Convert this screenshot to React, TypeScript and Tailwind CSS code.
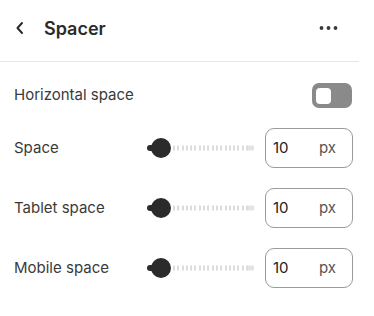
import React from "react";

function Slider() {
  return (
    <div className="relative w-[108px] h-[20px] flex items-center">
      <div className="absolute left-[26px] right-[6px] top-1/2 -translate-y-1/2 h-[5px] bg-[repeating-linear-gradient(90deg,#dcdcdc_0_2px,transparent_2px_4.3px)]" />
      <div className="absolute right-[1px] top-1/2 -translate-y-1/2 h-[5px] w-[6px] bg-[#e3e3e3] rounded-[1px]" />
      <div className="absolute left-0 top-1/2 -translate-y-1/2 h-[6px] w-[10px] bg-[#2b2b2b] rounded-l-full" />
      <div className="absolute left-[4px] top-0 w-[20px] h-[20px] rounded-full bg-[#2b2b2b]" />
    </div>
  );
}

function Row({ label }: { label: string }) {
  return (
    <div className="flex items-center h-[40px]">
      <div className="w-[133px] text-[15px] text-[#3a3a3a]">{label}</div>
      <Slider />
      <div className="ml-auto w-[88px] h-[40px] border border-[#9a9a9a] rounded-[9px] flex items-center pl-[7px] pr-[16px] text-[15px]">
        <span className="text-[#222]">10</span>
        <span className="ml-auto text-[#555]">px</span>
      </div>
    </div>
  );
}

export default function App() {
  return (
    <div className="w-[374px] h-[316px] bg-white" style={{ fontFamily: "Inter, 'Noto Sans', sans-serif" }}>
      <div className="w-[359px]">
        <div className="h-[62px] pb-[5px] border-b border-[#e6e6e6] flex items-center">
          <div className="flex items-center h-[57px] w-full">
            <svg width="10" height="14" viewBox="0 0 10 14" className="ml-[15px]">
              <path d="M7 2 L2.5 7 L7 12" fill="none" stroke="#2b2b2b" strokeWidth="2" strokeLinecap="round" strokeLinejoin="round" />
            </svg>
            <div className="ml-[19px] text-[18px] font-semibold text-[#2b2b2b]">Spacer</div>
            <svg width="20" height="6" viewBox="0 0 20 6" className="ml-auto mr-[20px]">
              <circle cx="2.5" cy="3" r="1.9" fill="#3a3a3a" />
              <circle cx="9.5" cy="3" r="1.9" fill="#3a3a3a" />
              <circle cx="16.5" cy="3" r="1.9" fill="#3a3a3a" />
            </svg>
          </div>
        </div>
        <div className="pl-[14px] pt-[21px] flex flex-col">
          <div className="flex items-center h-[25px]">
            <div className="text-[15px] text-[#3a3a3a]">Horizontal space</div>
            <div className="ml-auto mr-[7px] w-[40px] h-[25px] rounded-[7px] bg-[#8a8a8a] flex items-center pl-[4px]">
              <div className="w-[15px] h-[16px] rounded-[4px] bg-white" />
            </div>
          </div>
          <div className="mt-[20px] pr-[6px] flex flex-col gap-[20px]">
            <Row label="Space" />
            <Row label="Tablet space" />
            <Row label="Mobile space" />
          </div>
        </div>
      </div>
    </div>
  );
}
